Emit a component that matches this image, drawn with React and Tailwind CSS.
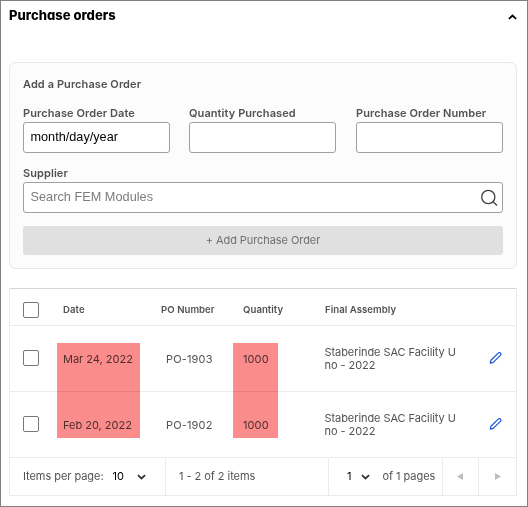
import React, { useState } from "react";

const orders = [
  { id: 1, date: "Mar 24, 2022", number: "PO-1903", quantity: "1000" },
  { id: 2, date: "Feb 20, 2022", number: "PO-1902", quantity: "1000" },
];

const Chevron = ({ up, className }) => (
  <svg viewBox="0 0 10 6" className={className} fill="none" stroke="currentColor" strokeWidth="2">
    <path d={up ? "M1 5 5 1.4 9 5" : "M1 1 5 4.6 9 1"} />
  </svg>
);

const SearchIcon = () => (
  <svg viewBox="0 0 18 18" className="w-[18px] h-[18px]" fill="none" stroke="#3d3d3d" strokeWidth="1.3">
    <circle cx="8.3" cy="8" r="6.6" />
    <path d="M13 12.7 17 16.4" />
  </svg>
);

const PencilIcon = () => (
  <svg viewBox="0 0 14 14" className="w-[14px] h-[14px] ml-px mb-px" fill="none" stroke="#1a55d6" strokeWidth="1.2" strokeLinejoin="round">
    <path d="M1.3 12.2 2 9.2 9.4 1.9Q10.3 1.1 11.4 2Q12.5 3.1 11.6 4.1L4.2 11.4Z" />
  </svg>
);

const Checkbox = () => (
  <input
    type="checkbox"
    className="appearance-none block w-4 h-4 border border-[#777] rounded-[2px] bg-white"
  />
);

const Field = ({ label, value, onChange }) => (
  <label className="block">
    <span className="block h-[17px] leading-[19px] font-semibold">{label}</span>
    <input
      type="text"
      value={value}
      onChange={onChange}
      className="block w-full h-[31px] mt-px border border-[#a0a0a0] rounded-[3px] bg-white px-[6.5px] pb-[2px] font-['Liberation_Sans',sans-serif] text-[12.7px] tracking-normal text-black"
    />
  </label>
);

const App = () => {
  const [date, setDate] = useState("month/day/year");
  const [quantity, setQuantity] = useState("");
  const [number, setNumber] = useState("");

  return (
    <div className="w-[528px] h-[507px] border border-[#808080] bg-white px-2 font-[Inter,sans-serif] text-[11px] tracking-[0.08px] text-[#525252]">
      <div className="flex justify-between h-[61px] pt-[5px] pr-[2px]">
        <h1 className="text-[13px] leading-[19px] font-extrabold tracking-[0.02px] text-black [font-feature-settings:'cv11']">
          Purchase orders
        </h1>
        <Chevron up className="w-[9px] h-[6px] mt-[8px] text-black" />
      </div>

      <form className="w-[508px] h-[207px] border border-[#e8e8e8] rounded-[6px] bg-[#fcfcfc] px-[13px] pt-[13px]">
        <h2 className="h-[17px] leading-[17px] font-semibold">Add a Purchase Order</h2>
        <div className="grid grid-cols-[166px_167px_147px] mt-[11px]">
          <div className="w-[147px]">
            <Field label="Purchase Order Date" value={date} onChange={(e) => setDate(e.target.value)} />
          </div>
          <div className="w-[147px]">
            <Field label="Quantity Purchased" value={quantity} onChange={(e) => setQuantity(e.target.value)} />
          </div>
          <div className="w-[147px]">
            <Field label="Purchase Order Number" value={number} onChange={(e) => setNumber(e.target.value)} />
          </div>
        </div>
        <div className="mt-[11px]">
          <span className="block h-[17px] leading-[19px] font-semibold">Supplier</span>
          <div className="flex items-center h-[31px] mt-px border border-[#a0a0a0] rounded-[3px] bg-white pl-[6.5px] pr-1">
            <input
              type="text"
              placeholder="Search FEM Modules"
              className="grow outline-none font-['Liberation_Sans',sans-serif] text-[12.7px] tracking-[0.03px] placeholder:text-[#7c7c7c]"
            />
            <SearchIcon />
          </div>
        </div>
        <button type="button" className="w-full h-[29px] mt-[13px] rounded-[3px] bg-[#e0e0e0] tracking-[-0.07px] text-[#6f6f6f]">
          + Add Purchase Order
        </button>
      </form>

      <div className="relative w-[508px] h-[208px] mt-[19px] border border-[#ebebeb] border-t-[#d6d6d6]">
        <div className="grid grid-cols-[40px_98px_82px_82px_164px_1fr] items-center h-[37px] pl-[13px] pt-[5px] border-b border-[#ebebeb] text-[9.6px] tracking-[0.05px] font-semibold">
          <Checkbox />
          <span className="pt-[2px]">Date</span>
          <span className="pt-[2px]">PO Number</span>
          <span className="pt-[2px]">Quantity</span>
          <span className="pt-[2px]">Final Assembly</span>
        </div>
        {orders.map((order) => (
          <div
            key={order.id}
            className="grid grid-cols-[40px_103px_77px_81.5px_163.5px_1fr] items-center h-[66px] pl-[13px] border-b border-[#ebebeb]"
          >
            <div className="pb-px">
              <Checkbox />
            </div>
            <span className="pt-px tracking-[-0.01px]">{order.date}</span>
            <span className="pt-px tracking-[0.15px]">{order.number}</span>
            <span className="pt-px tracking-[0.1px]">{order.quantity}</span>
            <span className="pt-px leading-[13.3px] tracking-[-0.07px]">
              Staberinde SAC Facility U<br />no - 2022
            </span>
            <PencilIcon />
          </div>
        ))}
        <div className="flex h-[37px] leading-[37px] tracking-[-0.05px]">
          <div className="flex items-center w-[156px] pl-[13px] border-r border-[#ebebeb]">
            <span className="w-[89.5px]">Items per page:</span>
            <span className="w-[24px] text-black">10</span>
            <Chevron className="w-[9px] h-[6px] text-[#333]" />
          </div>
          <div className="w-[163px] pl-[13px] border-r border-[#ebebeb]">1 - 2 of 2 items</div>
          <div className="flex items-center w-[114px] pl-[18px] border-r border-[#ebebeb]">
            <span className="w-[14px] text-black">1</span>
            <Chevron className="w-[9px] h-[6px] text-[#333]" />
            <span className="ml-[12.5px] whitespace-nowrap">of 1 pages</span>
          </div>
          <div className="flex items-center justify-center w-[36px] pr-px border-r border-[#ebebeb]">
            <svg viewBox="0 0 6 7" className="w-[6px] h-[7px]" fill="#bdbdbd">
              <path d="M6 0v7L0 3.5z" />
            </svg>
          </div>
          <div className="flex items-center justify-center grow">
            <svg viewBox="0 0 6 7" className="w-[6px] h-[7px]" fill="#bdbdbd">
              <path d="M0 0v7l6-3.5z" />
            </svg>
          </div>
        </div>
        <div className="absolute left-[47px] top-[54px] w-[83px] h-[95px] bg-[#fb8c8c] mix-blend-multiply pointer-events-none" />
        <div className="absolute left-[223px] top-[54px] w-[45px] h-[95px] bg-[#fb8c8c] mix-blend-multiply pointer-events-none" />
      </div>
    </div>
  );
};

export default App;
